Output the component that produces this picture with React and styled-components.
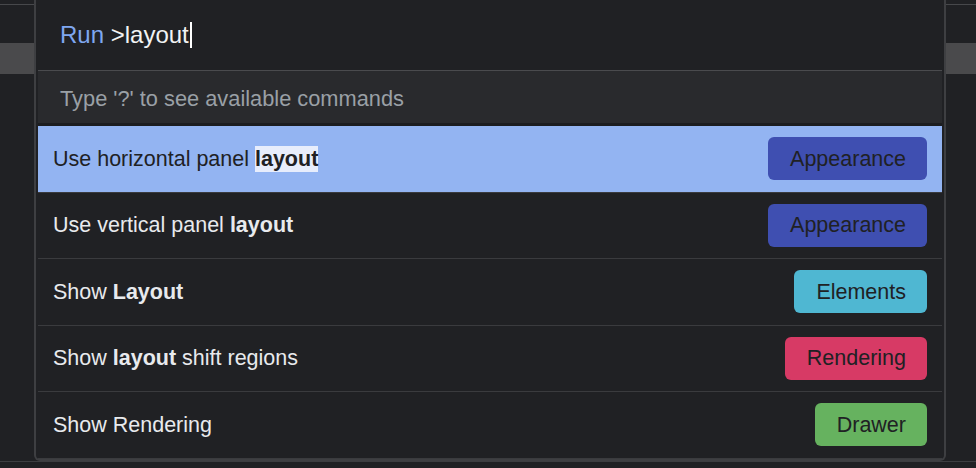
// Command menu overlay, dark theme.
import React from 'react';
import styled, { createGlobalStyle } from 'styled-components';

const commands = [
  { before: 'Use horizontal panel ', match: 'layout', after: '', tag: 'Appearance', color: '#3f4fb1', selected: true },
  { before: 'Use vertical panel ', match: 'layout', after: '', tag: 'Appearance', color: '#3f4fb1' },
  { before: 'Show ', match: 'Layout', after: '', tag: 'Elements', color: '#4fb7d2' },
  { before: 'Show ', match: 'layout', after: ' shift regions', tag: 'Rendering', color: '#d73a65' },
  { before: 'Show Rendering', match: '', after: '', tag: 'Drawer', color: '#66b25f' },
];

const App = () => {
  return (
    <>
      <GlobalStyle />
      <StyledPage>
        {/* Panels behind the overlay */}
        <StyledBackdrop>
          <StyledRule />
          <StyledToolbar />
          <StyledBottomRule />
        </StyledBackdrop>

        {/* Command menu */}
        <StyledDialog>
          <StyledPrompt>
            <StyledPromptLabel>Run</StyledPromptLabel>
            <StyledQuery>&nbsp;&gt;layout</StyledQuery>
            <StyledCaret />
          </StyledPrompt>
          <StyledHint>Type '?' to see available commands</StyledHint>
          <StyledList>
            {commands.map((cmd, i) => (
              <StyledRow key={i} $selected={cmd.selected}>
                <StyledTitle>
                  {cmd.before}
                  {cmd.match && <StyledMatch $selected={cmd.selected}>{cmd.match}</StyledMatch>}
                  {cmd.after}
                </StyledTitle>
                <StyledTag $color={cmd.color}>{cmd.tag}</StyledTag>
              </StyledRow>
            ))}
          </StyledList>
        </StyledDialog>
      </StyledPage>
    </>
  );
};

export default App;

const GlobalStyle = createGlobalStyle`
  body {
    margin: 0;
    background: #202124;
    font-family: "Liberation Sans", Arial, sans-serif;
  }
`;

const StyledPage = styled.div`
  position: relative;
  width: 976px;
  height: 468px;
  overflow: hidden;
  background: #202124;
`;

const StyledBackdrop = styled.div`
  display: flex;
  flex-direction: column;
  height: 100%;
  padding-top: 4px;
  box-sizing: border-box;
`;

const StyledRule = styled.div`
  height: 1px;
  background: #47484b;
`;

const StyledToolbar = styled.div`
  margin-top: 38px;
  height: 31px;
  background: #4a4a4c;
`;

const StyledBottomRule = styled.div`
  margin-top: auto;
  margin-bottom: 6px;
  height: 1px;
  background: #3d3e41;
`;

const StyledDialog = styled.div`
  position: absolute;
  top: 0;
  left: 34px;
  width: 912px;
  box-sizing: border-box;
  padding: 0 2px;
  background: #202124;
  border: 2px solid #3e3f42;
  border-top: none;
  border-radius: 0 0 6px 6px;
`;

const StyledPrompt = styled.div`
  display: flex;
  align-items: center;
  height: 70px;
  padding-left: 22px;
  font-size: 24px;
  border-bottom: 1px solid #4a4b4e;
`;

const StyledPromptLabel = styled.span`color: #7fa7f0;`;

const StyledQuery = styled.span`color: #f1f3f4;`;

const StyledCaret = styled.span`
  width: 2px;
  height: 26px;
  margin-left: 1px;
  background: #ffffff;
`;

const StyledHint = styled.div`
  display: flex;
  align-items: center;
  height: 55px;
  box-sizing: border-box;
  padding: 3px 0 0 22px;
  background: #292a2d;
  color: #9aa0a6;
  font-size: 21.8px;
  border-bottom: 3px solid #1c1d20;
`;

const StyledList = styled.div`
  display: flex;
  flex-direction: column;
`;

const StyledRow = styled.div`
  display: flex;
  align-items: center;
  justify-content: space-between;
  height: 66.5px;
  box-sizing: border-box;
  padding: 0 15px;
  border-bottom: 1px solid #3a3b3e;
  background: ${({ $selected }) => ($selected ? '#93b4f2' : 'transparent')};
  color: ${({ $selected }) => ($selected ? '#202124' : '#e8eaed')};
  font-size: 21.5px;
`;

const StyledTitle = styled.span`
  padding-top: 1px;
  white-space: pre;
`;

const StyledMatch = styled.b`
  padding: 1px 0;
  background: ${({ $selected }) => ($selected ? '#e7edfc' : 'transparent')};
`;

const StyledTag = styled.span`
  display: flex;
  align-items: center;
  height: 43px;
  padding: 1px 21px 0 22px;
  box-sizing: border-box;
  border-radius: 6px;
  background: ${({ $color }) => $color};
  color: #202124;
  font-size: 21.5px;
`;
